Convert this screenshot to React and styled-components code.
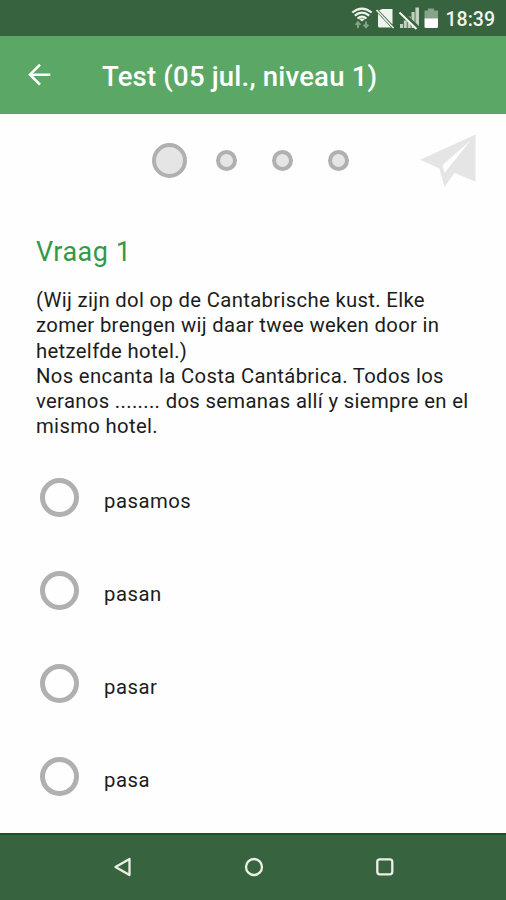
import React from 'react'
import styled, {createGlobalStyle} from 'styled-components'

const GlobalStyle = createGlobalStyle`
  body {
    margin: 0;
    background: #fefefe;
    font-family: Roboto, sans-serif;
  }
`

const Screen = styled.div`
  display: flex;
  flex-direction: column;
  width: 506px;
  height: 900px;
  overflow: hidden;
`

const StatusBar = styled.div`
  display: flex;
  justify-content: flex-end;
  align-items: center;
  box-sizing: border-box;
  height: 36px;
  padding-right: 11px;
  background: #37633e;
`

const Clock = styled.span`
  margin-left: 6px;
  color: #f1f5ef;
  font-size: 19.5px;
  font-weight: 500;
  line-height: 32px;
  padding-top: 4px;
`

const Toolbar = styled.header`
  display: flex;
  align-items: center;
  height: 78px;
  padding-left: 27px;
  background: #5ba866;
`

const Title = styled.h1`
  margin: 3px 0 0 51px;
  color: #fff;
  font-size: 27.5px;
  font-weight: 500;
  line-height: 32px;
  letter-spacing: .2px;
  white-space: nowrap;
`

const Progress = styled.div`
  display: flex;
  align-items: center;
  justify-content: space-between;
  height: 93px;
  padding: 0 29px 0 152px;
`

const Steps = styled.div`
  display: flex;
  align-items: center;
  gap: 35px;
`

const Step = styled.span`
  box-sizing: border-box;
  width: ${props => props.$current ? 35 : 21}px;
  height: ${props => props.$current ? 35 : 21}px;
  margin-right: ${props => props.$current ? -6 : 0}px;
  border: 4px solid #b0b0b0;
  border-radius: 50%;
  background: #e5e5e5;
`

const Question = styled.main`
  flex: 1;
  padding: 28px 32px 0 36px;
`

const Heading = styled.h2`
  margin: 0;
  color: #339947;
  font-size: 27px;
  font-weight: 400;
  line-height: 34px;
  letter-spacing: .5px;
`

const Text = styled.p`
  margin: 19px 0 0;
  color: #1c1c1c;
  font-size: 20.3px;
  line-height: 25.3px;
  letter-spacing: .33px;
  white-space: nowrap;
`

const Options = styled.div`
  display: flex;
  flex-direction: column;
  gap: 54px;
  margin: 38px 0 0 4px;
`

const Option = styled.label`
  display: flex;
  align-items: center;
  gap: 25px;
  height: 39px;
  color: #1c1c1c;
  font-size: 20.3px;
  letter-spacing: .5px;
`

const Radio = styled.span`
  box-sizing: border-box;
  width: 39px;
  height: 39px;
  border: 5px solid #b0b0b0;
  border-radius: 50%;
`

const OptionText = styled.span`
  padding-top: 7px;
  line-height: 24px;
`

const NavBar = styled.nav`
  display: flex;
  justify-content: center;
  align-items: center;
  box-sizing: border-box;
  gap: 107px;
  height: 67px;
  padding: 0 0 2px 1px;
  border-top: 2px solid #17541f;
  background: #37633e;
`

const StatusIcons = () => (
  <svg width="90" height="30" viewBox="350 3 90 30">
    <g fill="none" stroke="#eef3ec" strokeWidth="2.200">
      <path d="M352.300 12.500Q362 4.600 371.700 12.500" />
      <path d="M354.800 15.600Q362 9.500 369.200 15.600" />
      <path d="M357.500 18.500Q362 14.900 366.500 18.500" />
    </g>
    <path d="M358.500 18.500H365.500L362 21.500Z" fill="#eef3ec" />
    <g fill="none" stroke="#86a488" strokeWidth="1.900">
      <path d="M358 28V22.300M355.600 24.800L358 22.200L360.400 24.800" />
      <path d="M366 21.500V27M363.600 24.700L366 27.300L368.400 24.700" />
    </g>
    <path d="M382 9H392.500V24.500L379 10.500Z" fill="#f0f4ee" />
    <path d="M378 13.500L391 27.500H379.500Q378 27.500 378 26Z" fill="#f0f4ee" />
    <path d="M376.500 10L393.500 28" stroke="#eef3ec" strokeWidth="1.600" />
    <g fill="#c3d1c2">
      <path d="M400 24H403V28H400Z" />
      <path d="M403.800 20.500H406.800V28H403.800Z" />
      <path d="M407.600 16.500H410.700V28H407.600Z" />
      <path d="M411.500 12H414.600V28H411.500Z" />
      <path d="M415.400 7.500H419V28H415.400Z" />
    </g>
    <path d="M401 11.500L418.500 28" stroke="#37633e" strokeWidth="3.400" />
    <path d="M399.500 12.500L416.500 29" stroke="#f4f7f2" strokeWidth="2" />
    <path d="M428 8.500H434V10.500H438V19H424.500V10.500H428Z" fill="#86a488" />
    <path d="M424.500 18.500H438V26.500Q438 28 436.500 28H426Q424.500 28 424.500 26.500Z" fill="#fff" />
  </svg>
)

const BackArrow = () => (
  <svg width="24" height="24" viewBox="0 0 24 24" fill="none" stroke="#fff" strokeWidth="2.600">
    <path d="M23.300 11.700H3M13 1.700L3 11.700L13 21.700" />
  </svg>
)

const SendIcon = () => (
  <svg width="57" height="54" viewBox="420 133.500 57 54">
    <path
      fill="#e5e5e5"
      fillRule="evenodd"
      d="M420 159.300L475.500 134V181L454.500 172.500L444.500 186.500L439.500 168ZM471 139.500L442.500 164.500L444.500 172.500Z" />
  </svg>
)

const NavIcon = ({children}) => (
  <svg width="24" height="24" viewBox="0 0 24 24" fill="none" stroke="#eaf0e7" strokeWidth="2.300" strokeLinejoin="round">
    {children}
  </svg>
)

const steps = [1, 2, 3, 4]
const options = ['pasamos', 'pasan', 'pasar', 'pasa']

export default () => {
  return <Screen>
    <GlobalStyle />
    <StatusBar>
      <StatusIcons />
      <Clock>18:39</Clock>
    </StatusBar>
    <Toolbar>
      <BackArrow />
      <Title>Test (05 jul., niveau 1)</Title>
    </Toolbar>
    <Progress>
      <Steps>
        {steps.map(step => <Step key={step} $current={step === 1} />)}
      </Steps>
      <SendIcon />
    </Progress>
    <Question>
      <Heading>Vraag 1</Heading>
      <Text>
        (Wij zijn dol op de Cantabrische kust. Elke<br />
        zomer brengen wij daar twee weken door in<br />
        hetzelfde hotel.)<br />
        Nos encanta la Costa Cantábrica. Todos los<br />
        veranos ........ dos semanas allí y siempre en el<br />
        mismo hotel.
      </Text>
      <Options>
        {options.map(option => (
          <Option key={option}>
            <Radio />
            <OptionText>{option}</OptionText>
          </Option>
        ))}
      </Options>
    </Question>
    <NavBar>
      <NavIcon><path d="M4.500 12L18.500 4V20Z" /></NavIcon>
      <NavIcon><circle cx="12" cy="12" r="8" /></NavIcon>
      <NavIcon><rect x="4.300" y="4.300" width="15" height="15" rx="2.500" /></NavIcon>
    </NavBar>
  </Screen>
}
